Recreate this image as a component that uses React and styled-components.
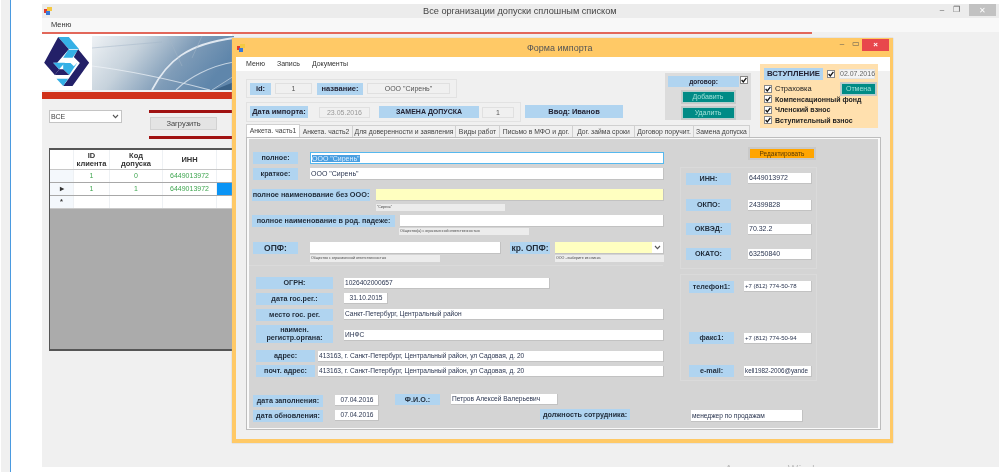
import React from 'react';
import styled, { createGlobalStyle } from 'styled-components';

const Global = createGlobalStyle`
  html, body { margin: 0; padding: 0; background: #fff; }
  body { font-family: "Liberation Sans", Arial, sans-serif; color: #222; overflow: hidden; }
  * { box-sizing: border-box; }
`;
const Screen = styled.div`
  position: relative; width: 1001px; height: 472px; overflow: hidden; display: flex; background: #fff;
  filter: blur(0.5px);
`;
const SideStrip = styled.div`
  width: 10px; height: 100%; margin-left: 1px; background: #f0f0f0; border-right: 1px solid #4a9ae0; flex: none;
`;
const MainWindow = styled.div`
  position: relative; overflow: hidden;
  margin: 4px 2px 5px 31px; flex: 1; background: #f0f0f0; display: flex; flex-direction: column; min-width: 0;
`;
const Watermark = styled.div`
  position: absolute; left: 683px; top: 458px; font-size: 11px; line-height: 14px; color: #bdbdbd; white-space: nowrap; letter-spacing: 0.6px;
`;
const TitleBar = styled.div`
  height: 14px; flex: none; background: #ececec; display: flex; align-items: center; padding-left: 2px; position: relative;
`;
const TitleText = styled.div`
  position: absolute; left: 381px; top: 0; font-size: 9.2px; line-height: 14px; color: #444; white-space: nowrap;
`;
const Controls = styled.div`
  margin-left: auto; display: flex; align-items: center; height: 100%; margin-right: 3px; gap: 6px;
`;
const CloseGray = styled.div`
  width: 27px; height: 12px; margin-top: -2px; margin-left: 3px; background: #c2c2c2; color: #fff; font-size: 8px; display: flex; align-items: center; justify-content: center;
`;
const MainMenu = styled.div`
  height: 14px; flex: none; background: #f8f8f8; font-size: 7.5px; line-height: 13px; padding-left: 9px; color: #333;
`;
const ThinRed = styled.div`
  height: 2px; width: 770px; flex: none; background: #e2675a;
`;
const BannerRow = styled.div`
  display: flex; height: 56px; background: #fff; flex: none; width: 190px; padding-top: 2px;
`;
const RedBar = styled.div`
  height: 7px; margin-top: 2px; width: 190px; flex: none; background: #d0321a;
`;
const Controls2 = styled.div`
  display: flex; align-items: flex-start; flex: none; padding: 11px 0 0 7px; height: 49px;
`;
const Combo = styled.div`
  width: 73px; height: 13px; background: #fff; border: 1px solid #c4c4c4; font-size: 7px; line-height: 11px; padding-left: 1px; display: flex; justify-content: space-between; color: #444;
`;
const LoadBox = styled.div`
  margin-left: 27px; width: 84px; display: flex; flex-direction: column; align-items: flex-start;
`;
const DarkRule = styled.div`
  height: 3px; width: 100%; background: #a01212;
`;
const LoadButton = styled.div`
  width: 67px; height: 13px; margin: 4px 0 6px 1px; background: #e4e4e4; border: 1px solid #d2d2d2; font-size: 7.5px; line-height: 11px; text-align: center; color: #444;
`;
const Grid = styled.div`
  width: 186px; height: 203px; margin-left: 7px; flex: none; background: #ababab; border: 1px solid #555; border-width: 2px 0 2px 1px; border-right: 0; overflow: hidden;
`;
const GridRow = styled.div`
  display: grid; grid-template-columns: 24px 36px 53px 54px 18px; height: ${p => p.$h}px; border-bottom: 1px solid ${p => p.$line || '#c8c8c8'}; background: #fff;
`;
const GridCell = styled.div`
  border-right: 1px solid #eef1f4; display: flex; align-items: center; justify-content: center; text-align: center;
  font-size: ${p => p.$head ? '7.5px' : '7px'}; line-height: 8px; font-weight: ${p => p.$head ? 700 : 400};
  color: ${p => p.$head ? '#333' : '#3fa650'}; background: ${p => p.$bg || '#fff'};
`;
const Dialog = styled.div`
  position: absolute; left: 232px; top: 38px; width: 661px; height: 405px; background: #f0f0f0; border: 4px solid #ffc966; border-top-width: 1px; border-right-width: 3px; box-shadow: 0 0 1px #aaa; display: flex; flex-direction: column;
`;
const DialogTitle = styled.div`
  height: 18px; flex: none; background: #ffc966; margin-left: -1px; position: relative; display: flex; align-items: center; padding-left: 2px;
`;
const DialogTitleText = styled.div`
  position: absolute; left: 292px; top: 3px; font-size: 9px; line-height: 12px; color: #555;
`;
const DialogControls = styled.div`
  margin-left: auto; display: flex; height: 100%; align-items: flex-start;
`;
const WinGlyph = styled.div`
  width: ${p => p.$w}px; height: 12px; font-size: 8px; line-height: 10px; text-align: center; color: #555;
`;
const CloseRed = styled.div`
  width: 27px; height: 12px; margin-left: -1px; margin-right: 1px; background: #e8474c; color: #fff; font-size: 8px; line-height: 12px; text-align: center; font-weight: 700;
`;
const DialogMenu = styled.div`
  height: 14px; flex: none; background: #fff; display: flex; gap: 12px; padding-left: 10px; font-size: 7px; line-height: 13px; color: #333;
`;
const Header = styled.div`
  height: 62px; margin-top: -7px; flex: none; display: flex; align-items: flex-start; position: relative; z-index: 1;
`;
const HeaderLeft = styled.div`
  width: 429px; flex: none; padding: 15px 0 0 10px; display: flex; flex-direction: column; gap: 4px;
`;
const HeaderRow = styled.div`
  display: flex; align-items: flex-start;
`;
const InfoBox = styled.div`
  width: ${p => p.$w}px; height: ${p => p.$h}px; flex: none; border: 1px solid #e2e2e2; display: flex; align-items: center; padding-left: 3px;
`;
const HeadLabel = styled.div`
  width: ${p => p.$w}px; height: ${p => p.$h || 12}px; margin-left: ${p => p.$ml || 0}px; flex: none; background: #b0d4f0; color: #223;
  font-size: ${p => p.$fs || 7.5}px; font-weight: 700; text-align: center; line-height: ${p => p.$h || 12}px; white-space: nowrap;
`;
const ReadValue = styled.div`
  width: ${p => p.$w}px; height: 11px; margin-left: ${p => p.$ml || 0}px; flex: none; background: #f0f0f0; border: 1px solid #e0e0e0; color: ${p => p.$c || '#555'};
  font-size: 7px; line-height: 9px; text-align: center; white-space: nowrap;
`;
const InputLabel = styled(HeadLabel)`
  margin-top: 3px;
`;
const ContractPanel = styled.div`
  width: 86px; height: 47px; margin-top: 9px; flex: none; background: #dcdcdc; padding: 3px; display: flex; flex-direction: column; align-items: center; gap: 4px;
`;
const ContractTop = styled.div`
  display: flex; gap: 1px; align-self: flex-start;
`;
const TealButton = styled.div`
  width: ${p => p.$w}px; height: 12px; flex: none; margin-right: ${p => p.$mr || 0}px; background: #008b86; border: 1px solid #b5cfcd; outline: 1px solid #c8c8c8; color: #9fe0d8; font-size: 7px; line-height: 10px; text-align: center;
`;
const JoinPanel = styled.div`
  width: 118px; height: 64px; margin-left: 9px; flex: none; background: #ffe0ae; padding: 4px; display: flex; flex-direction: column;
`;
const JoinTop = styled.div`
  display: flex; align-items: center; gap: 4px; height: 12px;
`;
const JoinDate = styled.div`
  width: 36px; height: 10px; background: #f4f4f4; border: 1px solid #e4e4e4; font-size: 7px; line-height: 8px; color: #666; text-align: center; white-space: nowrap;
`;
const JoinBody = styled.div`
  display: flex; justify-content: space-between; margin-top: 3px;
`;
const JoinList = styled.div`
  display: flex; flex-direction: column; gap: 2.5px; padding-top: 1.5px;
`;
const JoinItem = styled.div`
  display: flex; align-items: center; gap: 3px; height: 8px; font-size: ${p => p.$fs || 7}px; font-weight: ${p => p.$bold ? 700 : 400}; color: #222; white-space: nowrap; width: 8px;
`;
const BoxCheck = styled.div`
  width: 8px; height: 8px; flex: none; background: #fff; border: 1px solid #888; display: flex; align-items: center; justify-content: center;
`;
const TabStrip = styled.div`
  height: 13px; flex: none; display: flex; padding-left: 10px; align-items: flex-end; margin-top: -2px;
`;
const Tab = styled.div`
  width: ${p => p.$w}px; height: ${p => p.$active ? 13 : 12}px; flex: none; background: ${p => p.$active ? '#fff' : '#f0f0f0'}; border: 1px solid #d0d0d0; border-bottom: 0; border-left-width: ${p => p.$active ? 1 : 0}px;
  font-size: 6.8px; line-height: 12px; text-align: center; color: #444; white-space: nowrap; overflow: hidden;
`;
const PageFrame = styled.div`
  width: 635px; height: 293px; margin-left: 10px; flex: none; background: #fafafa; border: 1px solid #bdbdbd; padding: 1px 2px 1px 2px;
`;
const Page = styled.div`
  height: 100%; background: #d4d4d4; display: flex; flex-direction: column;
`;
const PageTop = styled.div`
  display: flex; height: 245px; flex: none;
`;
const LeftCol = styled.div`
  width: 419px; flex: none; display: flex; flex-direction: column;
`;
const RightCol = styled.div`
  flex: 1; padding-left: 12px; display: flex; flex-direction: column;
`;
const Row = styled.div`
  display: flex; align-items: flex-start; margin-top: ${p => p.$mt || 0}px; padding-left: ${p => p.$x || 0}px;
`;
const FormLabel = styled.div`
  width: ${p => p.$w}px; height: ${p => p.$h || 12}px; margin-right: ${p => p.$gap || 0}px; flex: none; background: #b0d4f0; color: #1f2a38;
  font-size: ${p => p.$fs || 7.2}px; font-weight: 700; line-height: ${p => p.$lh || p.$h || 12}px; text-align: center; white-space: ${p => p.$wrap ? 'normal' : 'nowrap'};
  ${p => p.$wrap ? 'padding-top: 1px;' : ''}
`;
const Field = styled.div`
  width: ${p => p.$w}px; height: ${p => p.$h || 12}px; margin-top: ${p => p.$mt || 0}px; margin-right: ${p => p.$gap || 0}px; flex: none; background: ${p => p.$yellow ? '#ffffc0' : '#fff'};
  border: 1px solid ${p => p.$focus ? '#56b8ee' : '#c2c2c2'}; border-width: ${p => p.$focus ? '1px' : '0 1px 1px 0'}; font-size: ${p => p.$fs || 6.6}px; line-height: ${p => (p.$h || 12) - 1}px; padding-left: 1px; text-align: ${p => p.$center ? 'center' : 'left'}; color: #2a3550; white-space: nowrap; overflow: hidden;
`;
const Selected = styled.span`
  background: #4a9fe0; color: #d8ecff;
`;
const ComboField = styled(Field)`
  display: flex; padding: 0; justify-content: space-between; background: #fff;
`;
const ComboFill = styled.div`
  width: 97px; height: 100%; background: #ffffc0;
`;
const ComboArrow = styled.div`
  width: 11px; display: flex; align-items: center; justify-content: center;
`;
const Hint = styled.div`
  width: ${p => p.$w}px; height: 7px; margin-right: ${p => p.$gap || 0}px; flex: none; background: #ececec; font-size: 3.6px; line-height: 7px; padding-left: 1px; color: #444; white-space: nowrap; overflow: hidden;
`;
const OrangeButton = styled.div`
  width: 68px; height: 13px; margin: 8px 0 0 68px; flex: none; background: #ffa500; border: 2px solid #c9c9c9; font-size: 6.5px; line-height: 9px; text-align: center; color: #5a3a00;
`;
const GroupBox = styled.div`
  width: 137px; height: ${p => p.$h}px; margin-top: ${p => p.$mt}px; flex: none; border: 1px solid #dadada; padding-left: 5px; display: flex; flex-direction: column;
`;
const Divider = styled.div`
  height: 1px; width: 414px; margin-top: ${p => p.$mt}px; flex: none; background: #dadada;
`;
const PageBottom = styled.div`
  display: flex; align-items: flex-start; flex: 1;
`;
const BottomLeft = styled.div`
  width: 146px; flex: none; padding: 11px 0 0 4px; display: flex; flex-direction: column; gap: 3px;
`;
const BottomRight = styled.div`
  flex: 1; padding-top: 10px; display: flex; flex-direction: column;
`;
const Resize = styled.div`
  height: 6px; flex: none;
`;
const LogoSvg = styled.svg`
  flex: none; margin-left: 1px;
`;
const BannerSvg = styled.svg`
  flex: none; margin-left: 2px;
`;

const Check = () => (
  <svg width="6" height="6" viewBox="0 0 6 6"><path d="M0.6 3 L2.3 4.9 L5.4 0.9" fill="none" stroke="#111" strokeWidth="1.3" /></svg>
);
const AppIcon = () => (
  <svg width="8" height="8" viewBox="0 0 8 8">
    <rect x="0" y="2" width="4" height="4" fill="#e23b2e" /><rect x="3" y="0" width="5" height="4" fill="#f5c842" /><rect x="2" y="4" width="4" height="4" fill="#3a78d8" />
  </svg>
);
const Chevron = () => (
  <svg width="7" height="5" viewBox="0 0 7 5"><path d="M1 1 L3.5 3.6 L6 1" fill="none" stroke="#555" strokeWidth="1.1" /></svg>
);
const Logo = () => (
  <LogoSvg width="47" height="51" viewBox="130 115 140 153">
    <polygon points="175,118 207,118 238,155 207,155" fill="#35b0e6" />
    <polygon points="175,118 207,155 172,195 160,195 178,215 165,232 133,195" fill="#232068" />
    <polygon points="190,180 205,157 235,157 218,180" fill="#35b0e6" />
    <polygon points="235,155 268,195 218,265 190,265 204,246 240,196 222,178" fill="#232068" />
    <polygon points="170,243 205,243 190,265" fill="#35b0e6" />
    <polygon points="160,195 195,195 178,215" fill="#35b0e6" />
    <polygon points="190,196 232,196 208,232 190,215" fill="#35b0e6" />
    <polygon points="178,215 190,215 208,232 165,232" fill="#232068" />
    <polygon points="222,186 232,196 222,206 212,196" fill="#fff" />
  </LogoSvg>
);
const Banner = () => (
  <BannerSvg width="142" height="54" viewBox="0 0 142 54">
    <defs>
      <linearGradient id="sky" x1="0" x2="1" y1="0" y2="0.3">
        <stop offset="0" stopColor="#eff2f5" /><stop offset="0.35" stopColor="#c6d2dc" /><stop offset="0.7" stopColor="#7f9cb8" /><stop offset="1" stopColor="#5f86ab" />
      </linearGradient>
    </defs>
    <rect width="142" height="54" fill="url(#sky)" />
    <path d="M60 54 C75 25 95 8 142 2" stroke="#f2f6fa" strokeWidth="1.8" fill="none" opacity="0.85" />
    <path d="M0 30 C40 35 80 44 118 54" stroke="#f0f4f8" strokeWidth="1.2" fill="none" opacity="0.7" />
    <path d="M84 54 C96 42 118 30 142 26" stroke="#dbe5ee" strokeWidth="1.2" fill="none" opacity="0.8" />
    <path d="M120 54 L142 40" stroke="#c8d6e2" strokeWidth="1" fill="none" opacity="0.7" />
    <path d="M76 0 L90 30 M110 0 L100 22 M0 12 L70 6" stroke="#a4b6c7" strokeWidth="0.7" fill="none" opacity="0.7" />
    <path d="M122 54 L142 46 L142 54 Z" fill="#3c6388" />
  </BannerSvg>
);

const tabs = [
  ['Анкета. часть1', 54], ['Анкета. часть2', 53], ['Для доверенности и заявления', 103], ['Виды работ', 44],
  ['Письмо в МФО и дог.', 73], ['Дог. займа сроки', 62], ['Договор поручит.', 59], ['Замена допуска', 56],
];

export default function App() {
  return (
    <Screen>
      <Global />
      <SideStrip />
      <MainWindow>
        <TitleBar>
          <AppIcon />
          <TitleText>Все организации допуски сплошным списком</TitleText>
          <Controls>
            <WinGlyph $w={8}>–</WinGlyph>
            <WinGlyph $w={8}>❐</WinGlyph>
            <CloseGray>✕</CloseGray>
          </Controls>
        </TitleBar>
        <MainMenu>Меню</MainMenu>
        <ThinRed />
        <BannerRow><Logo /><Banner /></BannerRow>
        <RedBar />
        <Controls2>
          <Combo>ВСЕ<ComboArrow><Chevron /></ComboArrow></Combo>
          <LoadBox>
            <DarkRule />
            <LoadButton>Загрузить</LoadButton>
            <DarkRule />
          </LoadBox>
        </Controls2>
        <Grid>
          <GridRow $h={20}>
            <GridCell $head />
            <GridCell $head>ID<br />клиента</GridCell>
            <GridCell $head>Код<br />допуска</GridCell>
            <GridCell $head>ИНН</GridCell>
            <GridCell $head />
          </GridRow>
          <GridRow $h={13} $line="#a8a8a8">
            <GridCell $bg="#f4f8fc" />
            <GridCell>1</GridCell><GridCell>0</GridCell><GridCell>6449013972</GridCell><GridCell />
          </GridRow>
          <GridRow $h={13} $line="#a8a8a8">
            <GridCell $bg="#f4f8fc" $head>▸</GridCell>
            <GridCell>1</GridCell><GridCell>1</GridCell><GridCell>6449013972</GridCell><GridCell $bg="#0a94f5" />
          </GridRow>
          <GridRow $h={13}>
            <GridCell $bg="#f4f8fc" $head>*</GridCell>
            <GridCell /><GridCell /><GridCell /><GridCell />
          </GridRow>
        </Grid>
        <Watermark>Активация Windows</Watermark>
      </MainWindow>

      <Dialog>
        <DialogTitle>
          <AppIcon />
          <DialogTitleText>Форма импорта</DialogTitleText>
          <DialogControls>
            <WinGlyph $w={14}>–</WinGlyph>
            <WinGlyph $w={14}>▭</WinGlyph>
            <CloseRed>×</CloseRed>
          </DialogControls>
        </DialogTitle>
        <DialogMenu><span>Меню</span><span>Запись</span><span>Документы</span></DialogMenu>
        <Header>
          <HeaderLeft>
            <InfoBox $w={211} $h={19}>
              <HeadLabel $w={21}>id:</HeadLabel>
              <ReadValue $w={37} $ml={4}>1</ReadValue>
              <HeadLabel $w={46} $ml={5}>название:</HeadLabel>
              <ReadValue $w={83} $ml={4}>ООО "Сирень"</ReadValue>
            </InfoBox>
            <HeaderRow>
              <InfoBox $w={275} $h={20}>
                <HeadLabel $w={58}>Дата импорта:</HeadLabel>
                <ReadValue $w={51} $ml={11} $c="#999">23.05.2016</ReadValue>
                <HeadLabel $w={100} $ml={9} $fs={7}>ЗАМЕНА ДОПУСКА</HeadLabel>
                <ReadValue $w={32} $ml={3}>1</ReadValue>
              </InfoBox>
              <InputLabel $w={98} $h={13} $ml={4}>Ввод: Иванов</InputLabel>
            </HeaderRow>
          </HeaderLeft>
          <ContractPanel>
            <ContractTop>
              <HeadLabel $w={71} $h={11} $fs={6.5}>договор:</HeadLabel>
              <BoxCheck><Check /></BoxCheck>
            </ContractTop>
            <TealButton $w={53}>Добавить</TealButton>
            <TealButton $w={53}>Удалить</TealButton>
          </ContractPanel>
          <JoinPanel>
            <JoinTop>
              <HeadLabel $w={59} $h={12} $fs={7.8}>ВСТУПЛЕНИЕ</HeadLabel>
              <BoxCheck><Check /></BoxCheck>
              <JoinDate>02.07.2016</JoinDate>
            </JoinTop>
            <JoinBody>
              <JoinList>
                <JoinItem $fs={7.5}><BoxCheck><Check /></BoxCheck>Страховка</JoinItem>
                <JoinItem $bold><BoxCheck><Check /></BoxCheck>Компенсационный фонд</JoinItem>
                <JoinItem $bold><BoxCheck><Check /></BoxCheck>Членский взнос</JoinItem>
                <JoinItem $bold><BoxCheck><Check /></BoxCheck>Вступительный взнос</JoinItem>
              </JoinList>
              <TealButton $w={35} $mr={-2}>Отмена</TealButton>
            </JoinBody>
          </JoinPanel>
        </Header>
        <TabStrip>
          {tabs.map(([t, w], i) => <Tab key={t} $w={w} $active={i === 0}>{t}</Tab>)}
        </TabStrip>
        <PageFrame>
          <Page>
            <PageTop>
              <LeftCol>
                <Row $mt={13} $x={4}>
                  <FormLabel $w={45} $gap={12}>полное:</FormLabel>
                  <Field $w={354} $focus $fs={7}><Selected>ООО "Сирень"</Selected></Field>
                </Row>
                <Row $mt={4} $x={4}>
                  <FormLabel $w={45} $gap={12}>краткое:</FormLabel>
                  <Field $w={354} $fs={7}>ООО "Сирень"</Field>
                </Row>
                <Row $mt={9} $x={3}>
                  <FormLabel $w={118} $gap={6} $fs={7.3}>полное наименование без ООО:</FormLabel>
                  <Field $w={288} $yellow />
                </Row>
                <Row $mt={3} $x={127}><Hint $w={129}>"Сирень"</Hint></Row>
                <Row $mt={4} $x={3}>
                  <FormLabel $w={143} $gap={5}>полное наименование в род. падеже:</FormLabel>
                  <Field $w={264} />
                </Row>
                <Row $mt={1} $x={150}><Hint $w={130}>Общество(а) с ограниченной ответственностью</Hint></Row>
                <Row $mt={7} $x={4}>
                  <FormLabel $w={45} $gap={12} $fs={8.5}>ОПФ:</FormLabel>
                  <Field $w={191} $gap={9} />
                  <FormLabel $w={40} $gap={5} $fs={8.5}>кр. ОПФ:</FormLabel>
                  <ComboField $w={109}><ComboFill /><ComboArrow><Chevron /></ComboArrow></ComboField>
                </Row>
                <Row $mt={1} $x={61}>
                  <Hint $w={130} $gap={115}>Общество с ограниченной ответственностью</Hint>
                  <Hint $w={109}>ООО - выберите из списка</Hint>
                </Row>
                <Divider $mt={3} />
                <Row $mt={11} $x={7}>
                  <FormLabel $w={77} $gap={11}>ОГРН:</FormLabel>
                  <Field $w={206} $mt={1} $h={11}>1026402000657</Field>
                </Row>
                <Row $mt={4} $x={7}>
                  <FormLabel $w={77} $gap={11}>дата гос.рег.:</FormLabel>
                  <Field $w={44} $h={11} $center>31.10.2015</Field>
                </Row>
                <Row $mt={4} $x={7}>
                  <FormLabel $w={77} $gap={11}>место гос. рег.</FormLabel>
                  <Field $w={320} $h={11}>Санкт-Петербург, Центральный район</Field>
                </Row>
                <Row $mt={4} $x={7}>
                  <FormLabel $w={77} $gap={11} $h={18} $lh={8} $wrap>наимен.<br />регистр.органа:</FormLabel>
                  <Field $w={320} $mt={5} $h={11}>ИНФС</Field>
                </Row>
                <Row $mt={7} $x={7}>
                  <FormLabel $w={59} $gap={3}>адрес:</FormLabel>
                  <Field $w={346} $mt={1} $h={11}>413163, г. Санкт-Петербург, Центральный район, ул Садовая, д. 20</Field>
                </Row>
                <Row $mt={3} $x={7}>
                  <FormLabel $w={59} $gap={3}>почт. адрес:</FormLabel>
                  <Field $w={346} $mt={1} $h={11}>413163, г. Санкт-Петербург, Центральный район, ул Садовая, д. 20</Field>
                </Row>
              </LeftCol>
              <RightCol>
                <OrangeButton>Редактировать</OrangeButton>
                <GroupBox $h={102} $mt={7}>
                  <Row $mt={5}>
                    <FormLabel $w={45} $gap={17}>ИНН:</FormLabel>
                    <Field $w={64} $h={11} $fs={7}>6449013972</Field>
                  </Row>
                  <Row $mt={14}>
                    <FormLabel $w={45} $gap={17}>ОКПО:</FormLabel>
                    <Field $w={64} $mt={1} $h={11} $fs={7}>24399828</Field>
                  </Row>
                  <Row $mt={12}>
                    <FormLabel $w={45} $gap={17}>ОКВЭД:</FormLabel>
                    <Field $w={64} $mt={1} $h={11} $fs={7}>70.32.2</Field>
                  </Row>
                  <Row $mt={13}>
                    <FormLabel $w={45} $gap={17}>ОКАТО:</FormLabel>
                    <Field $w={64} $mt={1} $h={11} $fs={7}>63250840</Field>
                  </Row>
                </GroupBox>
                <GroupBox $h={107} $mt={5}>
                  <Row $mt={6} $x={3}>
                    <FormLabel $w={45} $gap={10}>телефон1:</FormLabel>
                    <Field $w={68} $h={11} $fs={6}>+7 (812) 774-50-78</Field>
                  </Row>
                  <Row $mt={39} $x={3}>
                    <FormLabel $w={45} $gap={10}>факс1:</FormLabel>
                    <Field $w={68} $mt={1} $h={11} $fs={6}>+7 (812) 774-50-94</Field>
                  </Row>
                  <Row $mt={21} $x={3}>
                    <FormLabel $w={45} $gap={10}>e-mail:</FormLabel>
                    <Field $w={68} $mt={1} $h={11} $fs={6.3}>kell1982-2006@yande</Field>
                  </Row>
                </GroupBox>
              </RightCol>
            </PageTop>
            <PageBottom>
              <BottomLeft>
                <Row>
                  <FormLabel $w={70} $gap={12}>дата заполнения:</FormLabel>
                  <Field $w={44} $h={11} $center>07.04.2016</Field>
                </Row>
                <Row>
                  <FormLabel $w={70} $gap={12}>дата обновления:</FormLabel>
                  <Field $w={44} $h={11} $center>07.04.2016</Field>
                </Row>
              </BottomLeft>
              <BottomRight>
                <Row>
                  <FormLabel $w={45} $h={11} $gap={11}>Ф.И.О.:</FormLabel>
                  <Field $w={107} $h={11}>Петров Алексей Валерьевич</Field>
                </Row>
                <Row $mt={4} $x={145}>
                  <FormLabel $w={90} $h={11} $gap={61}>должность сотрудника:</FormLabel>
                  <Field $w={112} $mt={1}>менеджер по продажам</Field>
                </Row>
              </BottomRight>
            </PageBottom>
          </Page>
        </PageFrame>
        <Resize />
      </Dialog>
    </Screen>
  );
}
